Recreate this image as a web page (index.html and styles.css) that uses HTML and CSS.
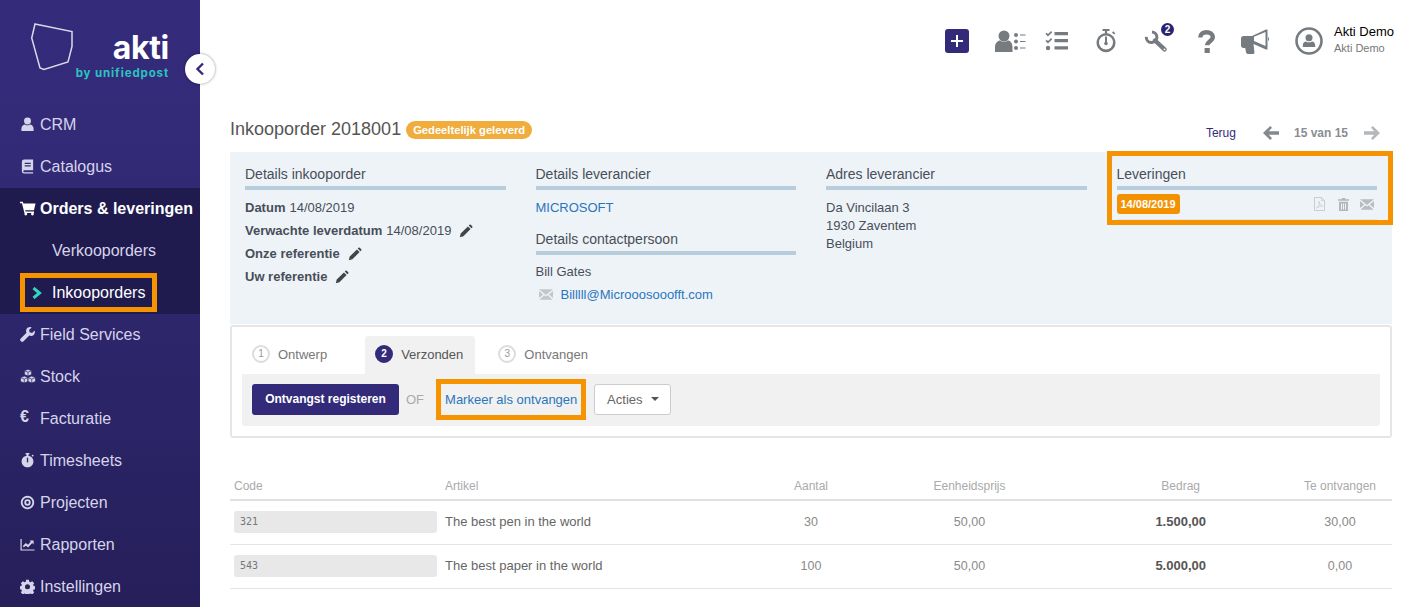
FILE: index.html
```html
<!DOCTYPE html>
<html lang="nl">
<head>
<meta charset="utf-8">
<title>Inkooporder 2018001</title>
<link rel="stylesheet" href="styles.css">
</head>
<body>
<svg class="defs" width="0" height="0" aria-hidden="true">
  <symbol id="i-user" viewBox="0 0 16 16"><circle cx="8" cy="4.200" r="3.700"/><path d="M1.500 15v-2.600C1.500 9.800 3.500 8 5.500 8c.8.600 1.600.9 2.500.9s1.700-.3 2.500-.9c2 0 4 1.800 4 4.400V15z"/></symbol>
  <symbol id="i-book" viewBox="0 0 16 16"><path fill-rule="evenodd" d="M2 3a2.500 2.500 0 0 1 2.500-2.500H14V12H4.500a1 1 0 0 0 0 2H14v1.500H4.500A2.500 2.500 0 0 1 2 13zM5 4v1.300h6.500V4zm0 2.700V8h6.500V6.700z"/></symbol>
  <symbol id="i-cart" viewBox="0 0 18 16"><path d="M0 .5h3.200l.6 2H17.500l-1.800 7.500H5.800l.4 1.500h9.600v1.500H5L2.200 2H0z"/><circle cx="6.500" cy="14.300" r="1.600"/><circle cx="14" cy="14.300" r="1.600"/></symbol>
  <symbol id="i-wrench" viewBox="0 0 16 16"><path d="M15.600 3.600l-2.700 2.700-2.600-.6-.6-2.600L12.400.4C10.300-.3 8 .4 7 2.200c-.7 1.300-.7 2.700-.1 3.900L.8 12.200a1.900 1.900 0 0 0 0 2.700l.3.300a1.900 1.900 0 0 0 2.700 0l6.100-6.100c1.200.6 2.600.6 3.900-.1 1.800-1 2.500-3.300 1.800-5.400z"/></symbol>
  <symbol id="i-cubes" viewBox="0 0 16 15"><g stroke="#2c2566" stroke-width=".7"><path d="M8 .3l3.600 1.500v3.800L8 7.100 4.400 5.600V1.800z"/><path d="M4.300 7.100l3.600 1.500v3.900l-3.600 1.500-3.800-1.500V8.600z"/><path d="M11.700 7.100l3.800 1.500v3.900l-3.800 1.500-3.600-1.500V8.600z"/><path d="M4.400 1.800L8 3.200l3.600-1.400M8 3.200v3.900M.5 8.600l3.800 1.500 3.600-1.500M4.300 10.100V14M8.100 8.600l3.600 1.500 3.800-1.500M11.700 10.100V14" fill="none"/></g></symbol>
  <symbol id="i-watch" viewBox="0 0 16 16"><path d="M6 0h4v1.600H9v1.200a6.300 6.300 0 1 1-2 0V1.600H6z"/><path d="M12.300 2.700l1.200-1.100 1.200 1.200-1.200 1.100z"/><path d="M7.300 5h1.400v5H7.300z" fill="#2c2566"/></symbol>
  <symbol id="i-target" viewBox="0 0 16 16"><path fill-rule="evenodd" d="M8 .8a7.200 7.200 0 1 1 0 14.400A7.200 7.200 0 0 1 8 .8zm0 2a5.200 5.200 0 1 0 0 10.400A5.200 5.200 0 0 0 8 2.800zm0 1.800a3.400 3.400 0 1 1 0 6.800 3.400 3.400 0 0 1 0-6.800zm0 1.900a1.500 1.500 0 1 0 0 3 1.500 1.500 0 0 0 0-3z"/></symbol>
  <symbol id="i-chart" viewBox="0 0 16 16"><path d="M.5 2h1.300v11.200H15.500v1.300H.5z"/><path d="M3 9.700l3.200-3.400 2.300 2 3-3.300-1.300-1.300h4.300v4.300l-1.500-1.500-4.400 4.800-2.300-2L4 11z"/></symbol>
  <symbol id="i-gear" viewBox="0 0 16 16"><path fill-rule="evenodd" d="M6.500.8h3l.4 2 1.300.6 1.800-1.100 2.100 2.100-1.100 1.800.6 1.300 2 .4v3l-2 .4-.6 1.300 1.100 1.800-2.100 2.100-1.800-1.100-1.300.6-.4 2h-3l-.4-2-1.300-.6-1.800 1.100-2.100-2.100 1.100-1.800-.6-1.300-2-.4v-3l2-.4.6-1.300L.9 4.400 3 2.300l1.800 1.100 1.300-.6zM8 5.600a2.700 2.700 0 1 0 0 5.400 2.700 2.700 0 0 0 0-5.400z"/></symbol>
  <symbol id="i-pencil" viewBox="0 0 14 14"><path d="M.8 13.200l.9-3.600 7.200-7.200 2.700 2.700-7.200 7.200zM9.700 1.600l.9-.9c.3-.3.800-.3 1.100 0l1.600 1.600c.3.300.3.800 0 1.100l-.9.900z"/></symbol>
  <symbol id="i-mail" viewBox="0 0 16 12"><path d="M0 0h16L8 6.500zM0 2l4.800 3.900L0 10zM16 2l-4.800 3.900L16 10zM6 6.800l2 1.600 2-1.600 5.500 5.200H.5z"/></symbol>
  <symbol id="i-arrow" viewBox="0 0 16 14"><path d="M7.200 0l1.800 1.800L5.800 5.300H16v3.400H5.800L9 12.200 7.200 14 0 7z"/></symbol>
</svg>

<div class="app">
  <aside class="sidebar">
    <div class="logo">
      <svg class="logo-shape" width="43" height="48" viewBox="0 0 43 48"><path d="M4 1l37 7.500v15l-4 15.500-24 7.500-4-1.500L.7 15z" fill="none" stroke="#dcdae8" stroke-width="1.500"/></svg>
      <div class="logo-text">
        <div class="logo-name">akti</div>
        <div class="logo-by">by unifiedpost</div>
      </div>
    </div>
    <button class="collapse" aria-label="Inklappen"><svg width="10" height="14" viewBox="0 0 10 14"><path d="M8 1.500L2.500 7 8 12.500" fill="none" stroke="#332b7a" stroke-width="2.400"/></svg></button>
    <nav class="nav">
      <a class="nav-item"><svg class="nav-icon"><use href="#i-user"/></svg>CRM</a>
      <a class="nav-item"><svg class="nav-icon"><use href="#i-book"/></svg>Catalogus</a>
      <div class="nav-group">
        <a class="nav-item nav-item-active"><svg class="nav-icon"><use href="#i-cart"/></svg>Orders &amp; leveringen</a>
        <a class="nav-sub">Verkooporders</a>
        <a class="nav-sub nav-sub-current">
          <svg class="chevron" width="10" height="12" viewBox="0 0 10 12"><path d="M1.500 1l6 5-6 5" fill="none" stroke="#36d3bd" stroke-width="3"/></svg>
          Inkooporders
        </a>
      </div>
      <a class="nav-item"><svg class="nav-icon"><use href="#i-wrench"/></svg>Field Services</a>
      <a class="nav-item"><svg class="nav-icon nav-icon-wide"><use href="#i-cubes"/></svg>Stock</a>
      <a class="nav-item"><span class="nav-icon nav-euro">€</span>Facturatie</a>
      <a class="nav-item"><svg class="nav-icon"><use href="#i-watch"/></svg>Timesheets</a>
      <a class="nav-item"><svg class="nav-icon"><use href="#i-target"/></svg>Projecten</a>
      <a class="nav-item"><svg class="nav-icon"><use href="#i-chart"/></svg>Rapporten</a>
      <a class="nav-item"><svg class="nav-icon"><use href="#i-gear"/></svg>Instellingen</a>
    </nav>
  </aside>

  <main class="main">
    <header class="topbar">
      <button class="plus" aria-label="Nieuw"><svg width="12" height="12" viewBox="0 0 12 12"><path d="M5 0h2v5h5v2H7v5H5V7H0V5h5z" fill="#fff"/></svg></button>
      <svg class="tb tb-people" width="31" height="22" viewBox="0 0 31 22"><circle cx="9" cy="6" r="5.500"/><path d="M0 22v-5c0-4 3-6.500 5-6.500 1 .8 2.500 1.300 4 1.300s3-.5 4-1.300c2 0 4.500 2.500 4.500 6.500v5z"/><circle cx="21" cy="5" r="2"/><circle cx="21" cy="11.500" r="2"/><circle cx="21" cy="18" r="2"/><path d="M25 4.500h5.500v1H25zM25 11h5.500v1H25zM25 17.500h5.500v1H25z"/></svg>
      <svg class="tb tb-tasks" width="23" height="20" viewBox="0 0 23 20"><path d="M.5 3l1.300-1.200L3 3l3-3 1.200 1.200L3 5.500zM.5 10l1.300-1.200L3 10l3-3 1.200 1.200L3 12.500z"/><circle cx="3" cy="17" r="2.200"/><path d="M9.500 1h13.500v3.200H9.500zM9.500 8h13.500v3.200H9.500zM9.500 15.300h13.500v3.200H9.500z"/></svg>
      <svg class="tb tb-watch" width="20" height="24" viewBox="0 0 20 24"><path d="M6.500 0h7v2h-2.400v2.300a9.500 9.500 0 1 1-2.200 0V2H6.500z"/><path d="M16 3.500l1.300-1.300 2 2L18 5.500z"/><circle cx="10" cy="13.500" r="7" fill="#fff"/><path d="M9 7.500h2v7H9z"/><circle cx="10" cy="14.500" r="1.800"/></svg>
      <span class="tools">
        <svg class="tb" width="24" height="22" viewBox="0 0 24 22"><path d="M2.300 6.800A5.300 5.300 0 1 0 8 1.900" fill="none" stroke="#767b80" stroke-width="3"/><path d="M11 10.500l9.500 8.800" fill="none" stroke="#767b80" stroke-width="4.400" stroke-linecap="round"/><circle cx="20.500" cy="19.300" r=".9" fill="#fff"/></svg>
        <span class="badge">2</span>
      </span>
      <svg class="tb-question" width="17" height="23" viewBox="0 0 17 23"><path d="M2.300 7.500C2.300 3.800 5 2.200 8.500 2.200c3.600 0 6.300 1.800 6.300 4.800 0 4-5.600 4.300-5.600 8.300" fill="none" stroke="#767b80" stroke-width="4.400"/><path d="M6.600 18h5.200v5H6.600z" fill="#767b80"/></svg>
      <svg class="tb tb-horn" width="28" height="25" viewBox="0 0 28 25"><path d="M0 9.500C0 8 1 7 2.500 7H11L25 .5h1.500v20H25L12.500 15l1 9-1 1H6.500l-1.300-1-1-5H2.500C1 19 0 18 0 16.500z"/><path d="M13 7.800l11.500-4.900v14l-11.500-4.800z" fill="#fff"/><path d="M27 8c.6.400 1 1.200 1 2s-.4 1.600-1 2z"/></svg>
      <svg class="tb tb-avatar" width="28" height="28" viewBox="0 0 28 28"><circle cx="14" cy="14" r="12.500" fill="none" stroke="#767b80" stroke-width="2.600"/><circle cx="14" cy="10.800" r="3.500"/><path d="M7.800 20v-1.800c0-2.500 1.700-3.800 3.200-3.800.9.600 1.900.9 3 .9s2.100-.3 3-.9c1.500 0 3.200 1.300 3.200 3.800V20z"/></svg>
      <div class="account">
        <div class="account-name">Akti Demo</div>
        <div class="account-org">Akti Demo</div>
      </div>
    </header>

    <div class="title-row">
      <h1 class="title">Inkooporder 2018001</h1>
      <span class="status">Gedeeltelijk geleverd</span>
      <div class="pager">
        <a class="back">Terug</a>
        <svg class="pager-prev" width="16" height="14"><use href="#i-arrow"/></svg>
        <span class="count">15 van 15</span>
        <svg class="pager-next" width="16" height="14"><use href="#i-arrow"/></svg>
      </div>
    </div>

    <section class="details">
      <div class="col">
        <h2 class="col-head">Details inkooporder</h2>
        <div class="rows">
          <div class="row"><b>Datum</b><span>14/08/2019</span></div>
          <div class="row"><b>Verwachte leverdatum</b><span>14/08/2019</span><svg class="pencil"><use href="#i-pencil"/></svg></div>
          <div class="row"><b>Onze referentie</b><svg class="pencil"><use href="#i-pencil"/></svg></div>
          <div class="row"><b>Uw referentie</b><svg class="pencil"><use href="#i-pencil"/></svg></div>
        </div>
      </div>
      <div class="col">
        <h2 class="col-head">Details leverancier</h2>
        <div class="rows">
          <div class="row"><a class="link">MICROSOFT</a></div>
        </div>
        <h2 class="col-head col-head-next">Details contactpersoon</h2>
        <div class="rows rows-tight">
          <div class="row">Bill Gates</div>
          <div class="row row-mail"><svg class="mail" width="14" height="11"><use href="#i-mail"/></svg><a class="link">Billlll@Microoosooofft.com</a></div>
        </div>
      </div>
      <div class="col">
        <h2 class="col-head">Adres leverancier</h2>
        <address class="address">Da Vincilaan 3<br>1930 Zaventem<br>Belgium</address>
      </div>
      <div class="col col-marked">
        <h2 class="col-head">Leveringen</h2>
        <div class="delivery">
          <span class="delivery-date">14/08/2019</span>
          <span class="delivery-actions">
            <svg width="11" height="14" viewBox="0 0 11 14"><path d="M.5.500h7l3 3v10H.5z" fill="none" stroke="#c9ccd0"/><path d="M7.500.500v3h3M2.500 11c2-1 3-4 2.700-6.500 0 2.500 1.500 4 3.500 4.500-2.500 0-4.500.8-6.200 2z" fill="none" stroke="#c9ccd0" stroke-width=".8"/></svg>
            <svg width="11" height="13" viewBox="0 0 11 13"><path d="M4 0h3l.6 1.200H11v1.600H0V1.200h3.400zM1 3.800h9V13H1zM3 5.500v6h1v-6zm2 0v6h1v-6zm2 0v6h1v-6z" fill="#b4b8bc" fill-rule="evenodd"/></svg>
            <svg class="mail-light" width="14" height="11"><use href="#i-mail"/></svg>
          </span>
        </div>
      </div>
    </section>

    <section class="workflow">
      <div class="tabs">
        <div class="tab tab-first"><span class="step">1</span>Ontwerp</div>
        <div class="tab tab-active"><span class="step step-active">2</span>Verzonden</div>
        <div class="tab"><span class="step">3</span>Ontvangen</div>
      </div>
      <div class="toolbar">
        <button class="primary">Ontvangst registeren</button>
        <span class="or">OF</span>
        <a class="mark">Markeer als ontvangen</a>
        <button class="actions">Acties <span class="caret"></span></button>
      </div>
    </section>

    <section class="table">
      <div class="tr th">
        <div class="c-code">Code</div>
        <div class="c-art">Artikel</div>
        <div class="c-mid">Aantal</div>
        <div class="c-mid">Eenheidsprijs</div>
        <div class="c-amt">Bedrag</div>
        <div class="c-mid">Te ontvangen</div>
      </div>
      <div class="tr td">
        <div class="c-code"><span class="code">321</span></div>
        <div class="c-art">The best pen in the world</div>
        <div class="c-mid">30</div>
        <div class="c-mid">50,00</div>
        <div class="c-amt"><b>1.500,00</b></div>
        <div class="c-mid">30,00</div>
      </div>
      <div class="tr td">
        <div class="c-code"><span class="code">543</span></div>
        <div class="c-art">The best paper in the world</div>
        <div class="c-mid">100</div>
        <div class="c-mid">50,00</div>
        <div class="c-amt"><b>5.000,00</b></div>
        <div class="c-mid">0,00</div>
      </div>
    </section>
  </main>
</div>
</body>
</html>
```

FILE: styles.css
```css
*, *::before, *::after { box-sizing: border-box; }
html, body { margin: 0; padding: 0; height: 100%; }
body { font-family: "Liberation Sans", Arial, sans-serif; background: #fff; color: #555; overflow: hidden; }
.defs { position: absolute; }
a { text-decoration: none; }
button { font-family: inherit; cursor: pointer; }

.app { display: flex; height: 607px; }

/* sidebar */
.sidebar { position: relative; width: 200px; flex: none; background: linear-gradient(#342b7b 0, #332b78 20%, #261f5a 100%); }
.logo { display: flex; height: 104px; padding: 23px 0 0 31px; }
.logo-shape { flex: none; }
.logo-text { width: 96px; margin-left: -1px; padding-top: 6px; text-align: right; }
.logo-name { font: 700 32px/37px "Inter", "Open Sans", sans-serif; color: #fff; letter-spacing: -.3px; }
.logo-by { font: 700 11.500px/14px "Inter", "Open Sans", sans-serif; color: #2cc3c0; letter-spacing: .88px; white-space: nowrap; }
.collapse { position: absolute; left: 185px; top: 54px; width: 30px; height: 30px; padding: 0; border: 0; border-radius: 50%; background: #fff; box-shadow: 0 0 3px rgba(0,0,0,.45); display: flex; align-items: center; justify-content: center; }
.nav-item { display: flex; align-items: center; height: 42px; padding-left: 20px; font-size: 16px; color: #d6d4ea; white-space: nowrap; }
.nav-icon { width: 15px; height: 15px; margin: -2px 5px 0 0; fill: #d6d4ea; flex: none; }
.nav-icon-wide { width: 16px; margin-right: 4px; }
.nav-euro { font-weight: 700; font-size: 16px; line-height: 15px; margin-top: -5px; }
.nav-group { background: #201b4f; height: 126px; }
.nav-item-active { color: #fff; font-weight: 700; }
.nav-item-active .nav-icon { fill: #fff; width: 16px; margin-right: 4px; }
.nav-sub { display: flex; align-items: center; height: 42px; padding-left: 52px; font-size: 16px; color: #d6d4ea; }
.nav-sub-current { width: 137px; height: 39px; margin: 1px 0 0 20px; padding-left: 7px; border: 5px solid #f59300; color: #fff; }
.chevron { margin-right: 10px; flex: none; }

/* main */
.main { flex: 1; min-width: 0; padding: 0 12px 0 30px; }
.topbar { display: flex; align-items: center; height: 82px; margin-right: -2px; }
.plus { width: 24px; height: 24px; margin-left: auto; padding: 0; border: 0; border-radius: 3px; background: #332b7a; display: flex; align-items: center; justify-content: center; }
.tb { fill: #767b80; flex: none; }
.tb-people { margin-left: 26px; }
.tb-tasks { margin-left: 19px; }
.tb-watch { margin-left: 28px; }
.tools { position: relative; display: flex; margin-left: 28px; }
.badge { position: absolute; left: 17px; top: -7px; width: 13px; height: 13px; border-radius: 50%; background: #2b2370; color: #fff; font-size: 10px; font-weight: 700; line-height: 13px; text-align: center; }
.tb-question { flex: none; margin-left: 30px; }
.tb-horn { margin-left: 26px; }
.tb-avatar { margin-left: 26px; }
.account { width: 60px; margin: 0 0 4px 11px; white-space: nowrap; }
.account-name { font-size: 13px; line-height: 15px; color: #000; }
.account-org { margin-top: 3px; font-size: 11px; line-height: 13px; color: #777; }

.title-row { display: flex; align-items: center; height: 32px; margin: 32px 0 6px; }
.title { margin: -2px 0 0; font-size: 18px; font-weight: 400; color: #555; }
.status { margin-left: 5px; padding: 0 7px; height: 18px; border-radius: 9px; background: #f0ad3d; color: #fff; font-size: 11.200px; font-weight: 700; line-height: 18px; }
.pager { display: flex; align-items: center; margin: 6px 0 0 auto; padding-right: 12px; }
.back { font-size: 12px; color: #332b7a; }
.pager-prev { margin-left: 27px; fill: #85898d; }
.count { margin-left: 15px; font-size: 12px; font-weight: 700; color: #8a8d91; }
.pager-next { margin-left: 16px; fill: #b5b8bb; transform: scaleX(-1); }

/* details */
.details { display: grid; grid-template-columns: repeat(4, 1fr); height: 172px; background: #eef3f8; }
.col { position: relative; padding: 12px 15px 0; }
.col-head { margin: 0; padding-bottom: 2px; height: 26px; border-bottom: 4px solid #b8cddb; font-size: 14px; font-weight: 400; line-height: 20px; color: #484e58; }
.col-head-next { margin-top: 10px; }
.rows { margin-top: 6px; }
.rows-tight { margin-top: 5px; }
.row { display: flex; align-items: center; gap: 4px; height: 23px; font-size: 13px; color: #484e58; white-space: nowrap; }
.row b { font-weight: 700; }
.pencil { width: 14px; height: 14px; margin-left: 4px; fill: #444; }
.link { color: #2a76bd; }
.row-mail { padding-left: 3px; gap: 8px; }
.mail { fill: #c4c7ca; flex: none; }
.address { margin-top: 9px; font-size: 13px; font-style: normal; line-height: 18px; color: #484e58; }
.col-marked::after { content: ""; position: absolute; left: 5.500px; right: -1px; top: -1px; height: 74px; border: 5px solid #f59300; pointer-events: none; }
.delivery { display: flex; align-items: center; height: 30px; padding-bottom: 1px; border-bottom: 1px solid #e0e6ec; }
.delivery-date { height: 20px; padding: 0 4px; border-radius: 3px; background: #f39200; color: #fff; font-size: 11px; font-weight: 700; line-height: 20px; }
.delivery-actions { display: flex; align-items: center; gap: 13px; margin-left: auto; padding-right: 3px; }
.mail-light { fill: #b9bdc1; margin-left: -2px; }

/* workflow */
.workflow { height: 113px; margin-top: 1px; padding: 9px 10px; border: 2px solid #e6e6e6; border-radius: 3px; }
.tabs { display: flex; height: 38px; gap: 13px; }
.tab { display: flex; align-items: center; height: 38px; padding: 0 10px 2px; font-size: 13px; color: #777; }
.tab-first { margin-right: 15px; }
.tab-active { padding-right: 12px; background: #f1f1f1; color: #555; border-radius: 3px 3px 0 0; }
.step { width: 18px; height: 18px; margin-right: 8px; border: 2px solid #ddd; border-radius: 50%; font-size: 10px; font-weight: 400; line-height: 14px; text-align: center; color: #999; }
.step-active { border-color: #332b7a; background: #332b7a; color: #fff; font-weight: 700; }
.toolbar { display: flex; align-items: center; height: 52px; padding: 0 10px 2px; background: #f1f1f1; border-radius: 0 0 3px 3px; }
.primary { width: 147px; height: 31px; padding: 0; border: 0; border-radius: 3px; background: #332b7a; color: #fff; font-size: 12px; font-weight: 700; }
.or { margin-left: 7px; font-size: 13px; color: #aaa; }
.mark { display: flex; align-items: center; height: 41px; margin-left: 12px; padding: 0 4px; border: 5px solid #f59300; font-size: 13px; color: #2a76bd; white-space: nowrap; }
.actions { display: flex; align-items: center; justify-content: center; width: 77px; height: 31px; margin-left: 8px; padding: 0; border: 1px solid #ccc; border-radius: 3px; background: #fff; color: #666; font-size: 13px; }
.caret { margin-left: 8px; border-top: 4px solid #555; border-left: 4px solid transparent; border-right: 4px solid transparent; }

/* table */
.table { margin-top: 33px; }
.tr { display: grid; grid-template-columns: 211px 329px 82px 235px 201px 104px; align-items: center; }
.th { height: 30px; padding-top: 1px; border-bottom: 2px solid #e0e0e6; font-size: 12px; color: #aaa; }
.td { height: 44px; padding-bottom: 2px; border-bottom: 1px solid #e4e4e4; font-size: 12.500px; color: #8a8a8a; }
.c-code { padding: 0 4px; }
.c-art { padding-left: 4px; }
.td .c-art { color: #666; font-size: 13px; }
.c-mid { text-align: center; }
.c-amt { text-align: right; padding-right: 88px; }
.td .c-amt { padding-right: 82px; }
.c-amt b { color: #555; font-size: 13px; }
.code { display: block; height: 22px; padding-left: 6px; border-radius: 3px; background: #e8e8e8; font: 10px/22px "DejaVu Sans Mono", monospace; color: #777; }
```
